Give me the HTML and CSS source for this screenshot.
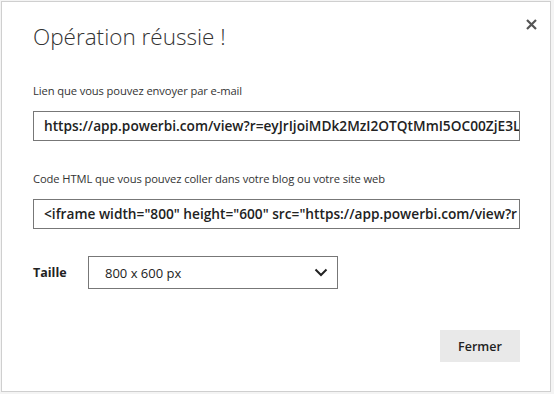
FILE: index.html
```html
<!DOCTYPE html>
<html lang="fr">
<head>
    <meta charset="UTF-8">
    <title>Opération réussie</title>
    <link rel="stylesheet" href="styles.css">
</head>
<body>
    <div class="dialog">
        <button class="close" aria-label="Fermer">
            <svg width="11" height="11" viewBox="0 0 11 11">
                <path d="M1 1 L10 10 M10 1 L1 10" stroke="#555" stroke-width="2.2"/>
            </svg>
        </button>
        <h1>Opération réussie !</h1>

        <div class="field">
            <label>Lien que vous pouvez envoyer par e-mail</label>
            <div class="box">https://app.powerbi.com/view?r=eyJrIjoiMDk2MzI2OTQtMmI5OC00ZjE3L</div>
        </div>

        <div class="field">
            <label>Code HTML que vous pouvez coller dans votre blog ou votre site web</label>
            <div class="box">&lt;iframe width="800" height="600" src="https://app.powerbi.com/view?r</div>
        </div>

        <div class="size-row">
            <span class="size-label">Taille</span>
            <div class="select">
                <span>800 x 600 px</span>
                <svg width="14" height="9" viewBox="0 0 14 9">
                    <path d="M1.5 1.5 L7 7 L12.5 1.5" fill="none" stroke="#222" stroke-width="2"/>
                </svg>
            </div>
        </div>

        <div class="footer">
            <button class="btn">Fermer</button>
        </div>
    </div>
</body>
</html>
```

FILE: styles.css
```css
body {
    margin: 0;
    background-color: #f4f4f4;
    font-family: 'Open Sans', sans-serif;
    color: #333;
}

.dialog {
    position: relative;
    margin: 1px;
    width: 550px;
    height: 391px;
    box-sizing: border-box;
    border: 1px solid #cfcfcf;
    background-color: white;
    padding: 0 30px 0 31px;
    display: flex;
    flex-direction: column;
}

.close {
    position: absolute;
    top: 16px;
    right: 13px;
    background: none;
    border: none;
    padding: 0;
    cursor: pointer;
}

h1 {
    margin: 18px 0 0 0;
    font-size: 22.5px;
    font-weight: 300;
    color: #333;
    line-height: 34px;
}

.field {
    display: flex;
    flex-direction: column;
}

.field:first-of-type {
    margin-top: 29px;
}

.field + .field {
    margin-top: 30px;
}

label {
    font-size: 11.2px;
    line-height: 16px;
    color: #333;
    letter-spacing: -0.1px;
}

.box {
    margin-top: 12px;
    height: 30px;
    box-sizing: border-box;
    border: 1px solid #777;
    padding: 0 2px 0 10px;
    font-size: 13.7px;
    font-weight: 600;
    line-height: 28px;
    color: #222;
    white-space: nowrap;
    overflow: hidden;
}

.size-row {
    margin-top: 27px;
    display: flex;
    align-items: center;
}

.size-label {
    width: 55px;
    font-size: 12.5px;
    font-weight: 700;
    color: #222;
}

.select {
    width: 250px;
    height: 33px;
    box-sizing: border-box;
    border: 1px solid #777;
    display: flex;
    align-items: center;
    justify-content: space-between;
    padding: 0 9px 0 16px;
    font-size: 13px;
    color: #222;
}

.footer {
    margin-top: auto;
    margin-bottom: 29px;
    display: flex;
    justify-content: flex-end;
}

.btn {
    width: 80px;
    height: 32px;
    border: none;
    background-color: #e9e9e9;
    font-family: 'Open Sans', sans-serif;
    font-size: 12.5px;
    font-weight: 600;
    color: #222;
    cursor: pointer;
}
```
